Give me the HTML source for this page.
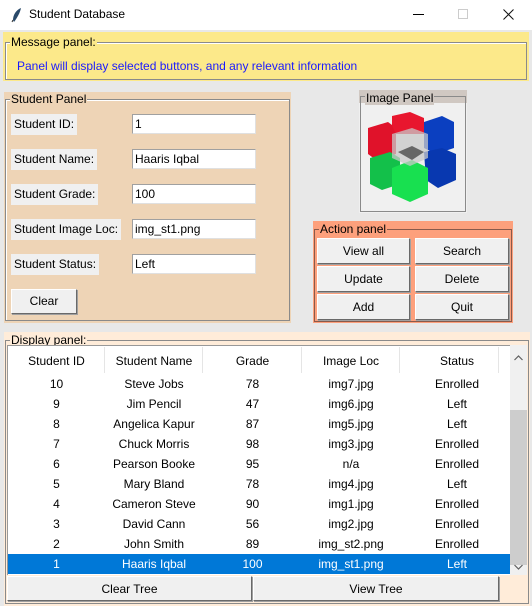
<!DOCTYPE html>
<html><head><meta charset="utf-8"><style>
*{margin:0;padding:0;box-sizing:border-box}
body{width:532px;height:606px;background:#e8e8e8;font-family:"Liberation Sans",sans-serif;font-size:12px;color:#000;position:relative;overflow:hidden}
.a{position:absolute}
.grp{position:absolute;border:1px solid #8a8a8a;box-shadow:inset 1px 1px 0 #fff}
.lg{position:absolute;padding:0 1px;white-space:nowrap}
.lbl{position:absolute;background:#f0f0f0;height:21px;line-height:21px;padding:0 3px}
.ent{position:absolute;background:#fff;border:1px solid #a0a0a0;border-right-color:#e0e0e0;border-bottom-color:#e0e0e0;height:20px;line-height:18px;padding-left:2px}
.btn{position:absolute;background:#f0f0f0;border:1px solid;border-color:#fff #696969 #696969 #fff;box-shadow:1px 1px 0 #a0a0a0;text-align:center}
.c{position:absolute;text-align:center;height:20px;line-height:20px}
</style></head><body>
<div class="a" style="left:0;top:0;width:532px;height:30px;background:#fff"></div>
<svg class="a" style="left:11px;top:7px" width="12" height="16" viewBox="0 0 12 16"><path d="M10 1 C5 3 2 8 2 13 L3 15 C6 11 9 6 10 1Z" fill="#2a4a6a"/><path d="M2 13 L1 15" stroke="#333"/></svg>
<div class="a" style="left:29px;top:7px;font-size:12px">Student Database</div>
<div class="a" style="left:413px;top:14px;width:11px;height:1px;background:#000"></div>
<div class="a" style="left:458px;top:9px;width:10px;height:10px;border:1px solid #ccc"></div>
<svg class="a" style="left:503px;top:9px" width="11" height="11" viewBox="0 0 11 11"><path d="M0.5 0.5L10.5 10.5M10.5 0.5L0.5 10.5" stroke="#111" stroke-width="1"/></svg>

<div class="a" style="left:3px;top:32px;width:526px;height:49px;background:#fce98a"></div>
<div class="grp" style="left:5px;top:42px;width:522px;height:38px"></div>
<div class="lg" style="left:10px;top:35px;background:#fce98a">Message panel:</div>
<div class="a" style="left:17px;top:59px;color:#1a1aff">Panel will display selected buttons, and any relevant information</div>

<div class="a" style="left:4px;top:92px;width:287px;height:231px;background:#eed4b6"></div>
<div class="grp" style="left:5px;top:99px;width:285px;height:222px"></div>
<div class="lg" style="left:10px;top:92px;background:#eed4b6">Student Panel</div>
<div class="lbl" style="left:11px;top:114px">Student ID:</div>
<div class="lbl" style="left:11px;top:149px">Student Name:</div>
<div class="lbl" style="left:11px;top:184px">Student Grade:</div>
<div class="lbl" style="left:11px;top:219px">Student Image Loc:</div>
<div class="lbl" style="left:11px;top:254px">Student Status:</div>
<div class="ent" style="left:132px;top:114px;width:124px">1</div>
<div class="ent" style="left:132px;top:149px;width:124px">Haaris Iqbal</div>
<div class="ent" style="left:132px;top:184px;width:124px">100</div>
<div class="ent" style="left:132px;top:219px;width:124px">img_st1.png</div>
<div class="ent" style="left:132px;top:254px;width:124px">Left</div>
<div class="btn" style="left:11px;top:289px;width:66px;height:25px;line-height:23px">Clear</div>

<div class="a" style="left:359px;top:90px;width:108px;height:13px;background:#d0c8c2"></div>
<div class="a" style="left:359px;top:103px;width:108px;height:110px;background:#f0f0f0"></div>
<div class="grp" style="left:360px;top:96px;width:106px;height:116px;box-shadow:none"></div>
<div class="lg" style="left:365px;top:91px;background:#d0c8c2">Image Panel</div>
<svg class="a" style="left:366px;top:112px" width="94" height="94" viewBox="0 0 94 94">
<polygon points="2,16 22,10 30,16 30,42 10,48 2,42" fill="#e0122a"/>
<polygon points="26,4 44,0 58,6 58,22 30,22 26,14" fill="#e8162e"/>
<polygon points="58,10 76,4 88,10 88,36 70,42 58,36" fill="#0b3fc0"/>
<polygon points="58,40 76,36 90,42 90,68 72,76 60,68" fill="#0838b0"/>
<polygon points="4,46 24,40 34,46 34,72 16,78 4,72" fill="#13c04a"/>
<polygon points="26,56 46,48 62,56 62,82 44,90 26,82" fill="#18e050"/>
<polygon points="26,22 46,16 62,22 62,46 44,54 26,46" fill="#c8c8c8" opacity=".75"/>
<polygon points="32,40 46,34 58,40 46,48" fill="#666"/></svg>

<div class="a" style="left:313px;top:221px;width:200px;height:102px;background:#fda07c"></div>
<div class="grp" style="left:314px;top:229px;width:198px;height:93px;box-shadow:none;border-color:#8a5a4a"></div>
<div class="lg" style="left:319px;top:222px;background:#fda07c">Action panel</div>
<div class="btn" style="left:317px;top:238px;width:93px;height:26px;line-height:25px">View all</div>
<div class="btn" style="left:415px;top:238px;width:94px;height:26px;line-height:25px">Search</div>
<div class="btn" style="left:317px;top:266px;width:93px;height:26px;line-height:25px">Update</div>
<div class="btn" style="left:415px;top:266px;width:94px;height:26px;line-height:25px">Delete</div>
<div class="btn" style="left:317px;top:294px;width:93px;height:26px;line-height:25px">Add</div>
<div class="btn" style="left:415px;top:294px;width:94px;height:26px;line-height:25px">Quit</div>

<div class="a" style="left:4px;top:332px;width:526px;height:274px;background:#ffecd9"></div>
<div class="grp" style="left:5px;top:340px;width:524px;height:264px;box-shadow:none"></div>
<div class="lg" style="left:10px;top:333px;background:#ffecd9">Display panel:</div>
<div class="a" style="left:7px;top:345px;width:503px;height:230px;background:#fff;border-left:1px solid #999;border-top:1px solid #999"></div>
<div class="a" style="left:104px;top:347px;width:1px;height:26px;background:#e5e5e5"></div>
<div class="a" style="left:202px;top:347px;width:1px;height:26px;background:#e5e5e5"></div>
<div class="a" style="left:301px;top:347px;width:1px;height:26px;background:#e5e5e5"></div>
<div class="a" style="left:399px;top:347px;width:1px;height:26px;background:#e5e5e5"></div>
<div class="a" style="left:498px;top:347px;width:1px;height:26px;background:#e5e5e5"></div>
<div class="a" style="left:510px;top:345px;width:17px;height:230px;background:#f0f0f0"></div>
<div class="a" style="left:510px;top:410px;width:17px;height:155px;background:#cdcdcd"></div>
<svg class="a" style="left:514px;top:355px" width="9" height="6" viewBox="0 0 9 6"><path d="M0.5 5L4.5 1L8.5 5" fill="none" stroke="#606060" stroke-width="1.2"/></svg>
<svg class="a" style="left:514px;top:564px" width="9" height="6" viewBox="0 0 9 6"><path d="M0.5 1L4.5 5L8.5 1" fill="none" stroke="#606060" stroke-width="1.2"/></svg>
<div class="a" style="left:8px;top:554px;width:502px;height:20px;background:#0078d7"></div>
<div id="t"></div>
<div class="btn" style="left:7px;top:576px;width:245px;height:25px;line-height:24px">Clear Tree</div>
<div class="btn" style="left:253px;top:576px;width:246px;height:25px;line-height:24px">View Tree</div>
<script>
var rows=[["Student ID","Student Name","Grade","Image Loc","Status"],["10","Steve Jobs","78","img7.jpg","Enrolled"],["9","Jim Pencil","47","img6.jpg","Left"],["8","Angelica Kapur","87","img5.jpg","Left"],["7","Chuck Morris","98","img3.jpg","Enrolled"],["6","Pearson Booke","95","n/a","Enrolled"],["5","Mary Bland","78","img4.jpg","Left"],["4","Cameron Steve","90","img1.jpg","Enrolled"],["3","David Cann","56","img2.jpg","Enrolled"],["2","John Smith","89","img_st2.png","Enrolled"],["1","Haaris Iqbal","100","img_st1.png","Left"]];
var xs=[8,105,203,302,400],ws=[97,98,99,98,114],h="";
rows.forEach(function(r,i){var y=i==0?351:374+(i-1)*20;r.forEach(function(v,j){h+='<div class="c" style="left:'+xs[j]+'px;top:'+y+'px;width:'+ws[j]+'px'+(i==10?';color:#fff':'')+'">'+v+'</div>';});});
document.getElementById("t").innerHTML=h;
</script>
</body></html>
